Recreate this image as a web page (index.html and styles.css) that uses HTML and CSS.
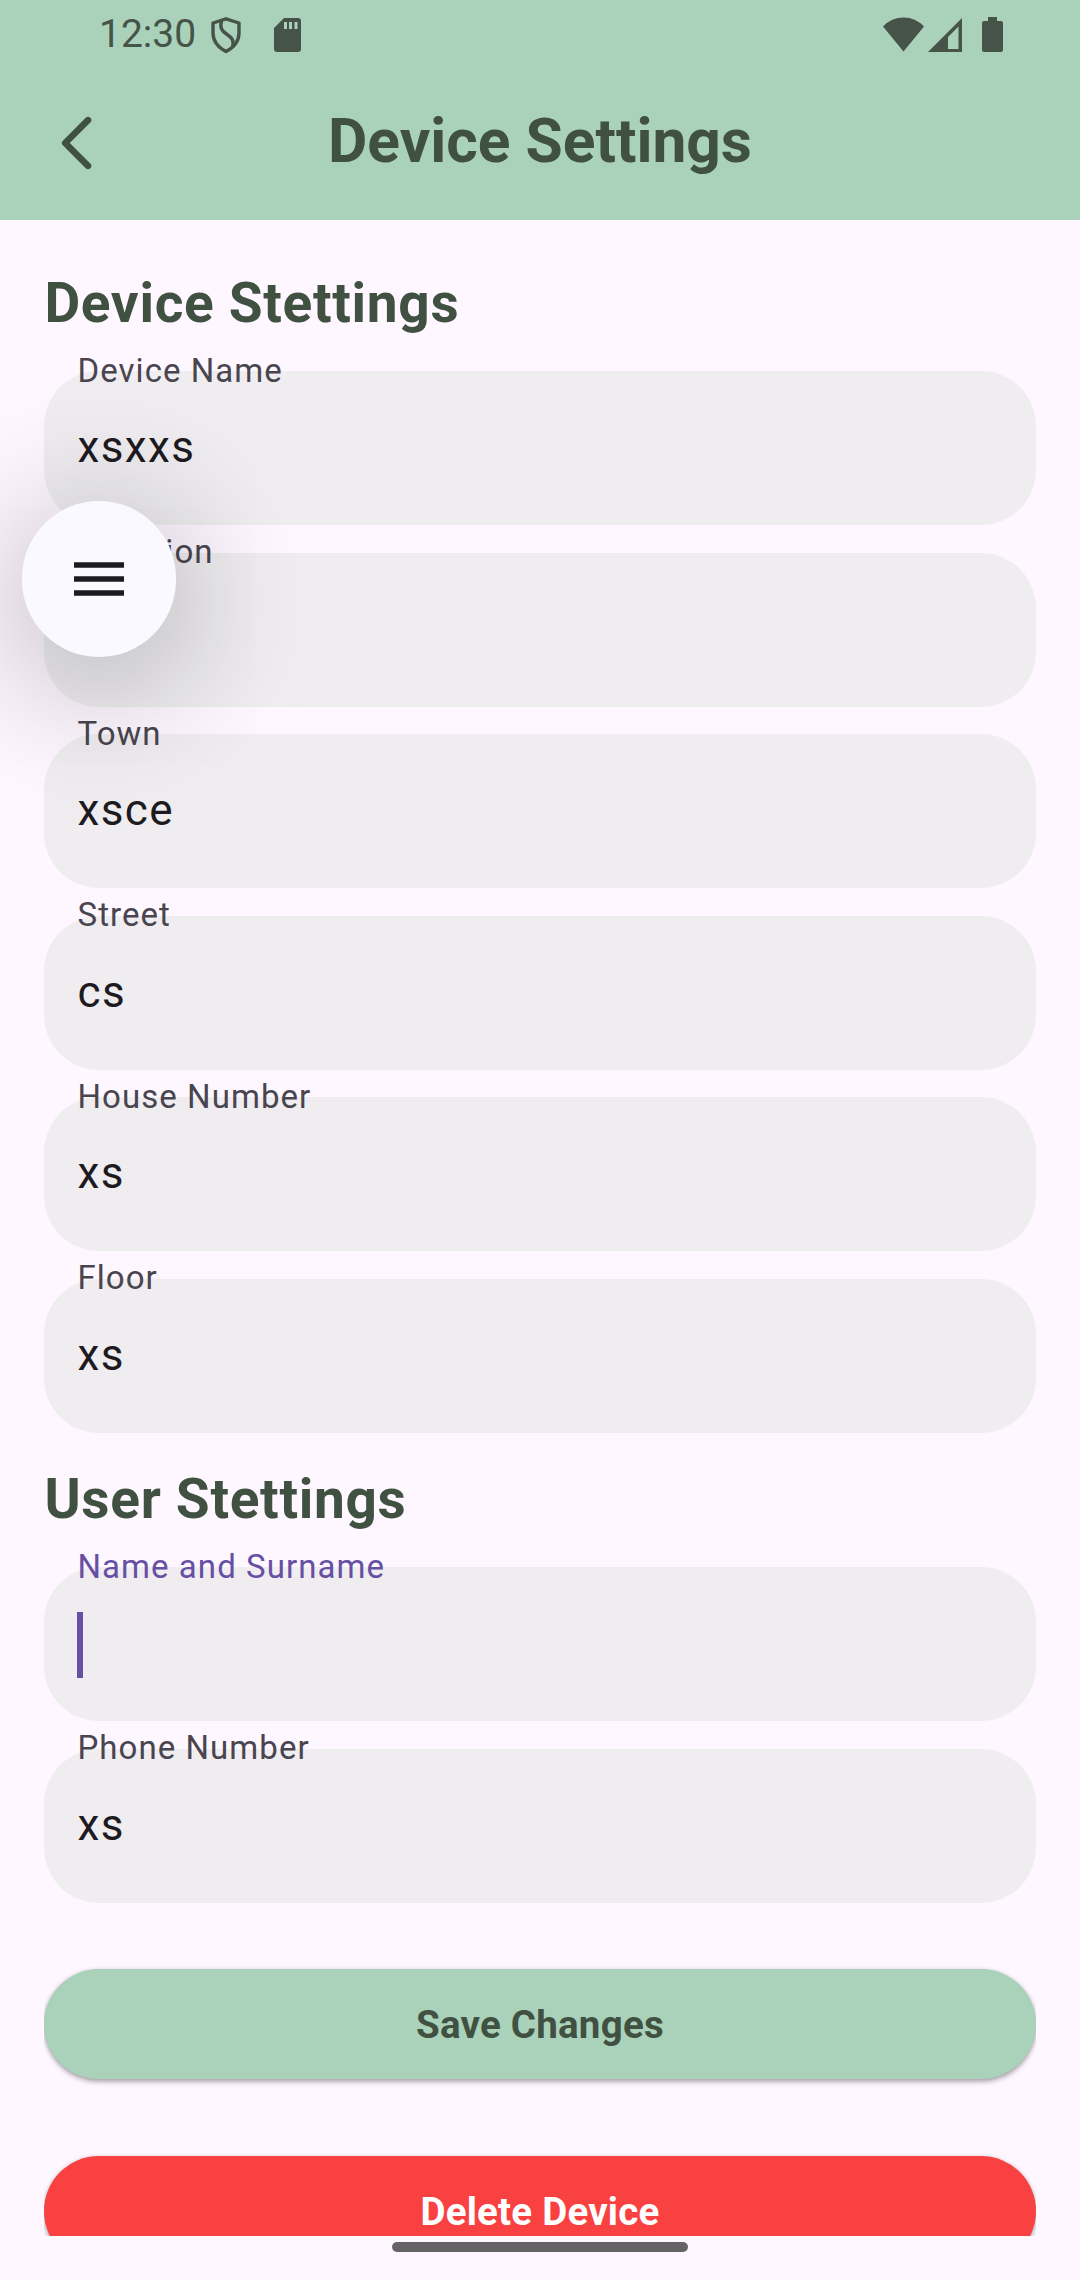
FILE: index.html
```html
<!DOCTYPE html>
<html lang="en">
<head>
<meta charset="utf-8">
<title>Device Settings</title>
<link rel="stylesheet" href="styles.css">
</head>
<body>
<div class="screen">
  <header class="top">
    <div class="status">
      <div class="status-left">
        <span class="clock">12:30</span>
        <svg class="shield" width="32" height="38" viewBox="0 0 32 38" fill="none" stroke="#465349" stroke-width="3.4" stroke-linejoin="round">
          <path d="M16 2.800 29 7V17C29 26 23.500 31.500 16 35.600 8.500 31.500 3 26 3 17V7Z"/>
          <path d="M11.500 4.500C9.500 12 12 15 16.500 18 21.500 21.500 24.500 24 22.500 31"/>
        </svg>
        <svg class="sd" width="27" height="34" viewBox="0 0 27 34">
          <path fill="#465349" fill-rule="evenodd" d="M10 0H24Q27 0 27 3V31Q27 34 24 34H3Q0 34 0 31V10ZM10 4V11H13V4ZM15 4V11H18V4ZM20.500 4V11H23.500V4Z"/>
        </svg>
      </div>
      <div class="status-right">
        <svg class="wifi" width="41" height="35" viewBox="0 0 41 35"><path fill="#465349" d="M0 9.500Q8.500 0.500 20.500 0.500T41 9.500L20.500 34.500Z"/></svg>
        <svg class="signal" width="34" height="34" viewBox="0 0 34 34"><path fill="#465349" fill-rule="evenodd" d="M34 0V34H0ZM30.500 8.500 20 19V31H30.500Z"/></svg>
        <svg class="battery" width="21" height="35" viewBox="0 0 21 35"><path fill="#465349" d="M6 0H15V4H19Q21 4 21 6V33Q21 35 19 35H2Q0 35 0 33V6Q0 4 2 4H6Z"/></svg>
      </div>
    </div>
    <div class="appbar">
      <svg class="back" width="32" height="54" viewBox="0 0 32 54"><path d="M28 4.200 5.200 27 28 49.800" fill="none" stroke="#405142" stroke-width="6.600" stroke-linecap="round" stroke-linejoin="round"/></svg>
      <h1 class="title">Device Settings</h1>
    </div>
  </header>

  <main class="content">
    <h2 class="section">Device Stettings</h2>
    <div class="fields">
      <div class="field"><span class="label">Device Name</span><span class="value">xsxxs</span></div>
      <div class="field"><span class="label">Location</span><span class="value"></span></div>
      <div class="field"><span class="label">Town</span><span class="value">xsce</span></div>
      <div class="field"><span class="label">Street</span><span class="value">cs</span></div>
      <div class="field"><span class="label">House Number</span><span class="value">xs</span></div>
      <div class="field"><span class="label">Floor</span><span class="value">xs</span></div>
    </div>
    <h2 class="section section-user">User Stettings</h2>
    <div class="fields">
      <div class="field focused"><span class="label">Name and Surname</span><span class="caret"></span></div>
      <div class="field"><span class="label">Phone Number</span><span class="value">xs</span></div>
    </div>
    <div class="actions">
      <button class="btn save">Save Changes</button>
      <button class="btn delete">Delete Device</button>
    </div>
  </main>

  <footer class="navbar"><div class="handle"></div></footer>

  <div class="menu">
    <svg width="50" height="34" viewBox="0 0 50 34"><path fill="#1b1b21" d="M0 .2H50V5.800H0ZM0 14.200H50V19.800H0ZM0 28.200H50V33.800H0Z"/></svg>
  </div>
</div>
</body>
</html>
```

FILE: styles.css
```css
* { box-sizing: border-box; }

body {
  margin: 0;
  font-family: Roboto, "Liberation Sans", sans-serif;
}

.screen {
  position: relative;
  display: flex;
  flex-direction: column;
  width: 1080px;
  height: 2280px;
  overflow: hidden;
  background: #fef7ff;
}

.top {
  flex: none;
  height: 220px;
  background: #aad2bb;
}

.status {
  display: flex;
  justify-content: space-between;
  height: 66px;
  padding: 0 77px 0 99px;
}

.status-left,
.status-right { display: flex; align-items: flex-start; }

.clock {
  width: 111px;
  margin-top: 11px;
  font-size: 39px;
  line-height: 46px;
  color: #465349;
}

.shield { margin-top: 16px; }
.sd { margin: 18px 0 0 32px; }
.wifi { margin-top: 17px; }
.signal { margin: 18px 0 0 4px; }
.battery { margin: 16.500px 0 0 20px; }

.appbar {
  display: grid;
  grid-template-columns: 120px 1fr 120px;
  align-items: center;
  height: 154px;
}

.back { margin: 0 0 0 60px; }

.title {
  margin: -2px 0 0;
  font-size: 60.500px;
  font-weight: 700;
  line-height: 76px;
  text-align: center;
  color: #405142;
}

.content {
  flex: none;
  height: 2016px;
  padding: 50px 44px 0;
  overflow: hidden;
}

.section {
  height: 101px;
  margin: 0;
  padding-left: .4px;
  font-size: 55px;
  font-weight: 700;
  line-height: 66px;
  letter-spacing: .6875px;
  color: #405142;
}

.section-user { height: 101.500px; margin-top: 33px; }

.fields {
  display: flex;
  flex-direction: column;
  gap: 27.500px;
}

.field {
  position: relative;
  display: flex;
  align-items: center;
  height: 154px;
  padding: 0 33px;
  border-radius: 55px;
  background: #efedf0;
}

.label {
  position: absolute;
  top: -20.500px;
  left: 33.500px;
  font-size: 33px;
  line-height: 40px;
  letter-spacing: 1.050px;
  color: #49454f;
}

.value {
  margin: -2px 0 0 .5px;
  font-size: 44px;
  line-height: 66px;
  letter-spacing: 1.375px;
  color: #1d1b20;
}

.focused .label { color: #6750a4; }

.caret {
  width: 5.500px;
  height: 66px;
  margin-top: 1px;
  background: #6750a4;
}

.actions {
  display: flex;
  flex-direction: column;
  gap: 77px;
  margin: 46px 0 0;
  padding-top: 20px;
  overflow: hidden;
}

.btn {
  flex: none;
  height: 110px;
  padding: 1px 0 0;
  border: 0;
  border-radius: 55px;
  font-family: inherit;
  font-size: 38.500px;
  font-weight: 700;
  letter-spacing: .22px;
  box-shadow: 0 3px 5px rgba(0, 0, 0, .3), 0 0 4px rgba(0, 0, 0, .1);
}

.save { background: #aad2bb; color: #405142; }
.delete { background: #f94141; color: #fff; }

.navbar {
  display: flex;
  justify-content: center;
  padding-top: 6px;
}

.handle {
  width: 296px;
  height: 10px;
  border-radius: 5px;
  background: #666367;
}

.menu {
  position: absolute;
  top: 501px;
  left: 22px;
  display: flex;
  align-items: center;
  justify-content: center;
  width: 154px;
  height: 156px;
  border-radius: 77px;
  background: #f9f9ff;
  box-shadow: 0 22px 140px 10px rgba(0, 0, 0, .28);
}
```
